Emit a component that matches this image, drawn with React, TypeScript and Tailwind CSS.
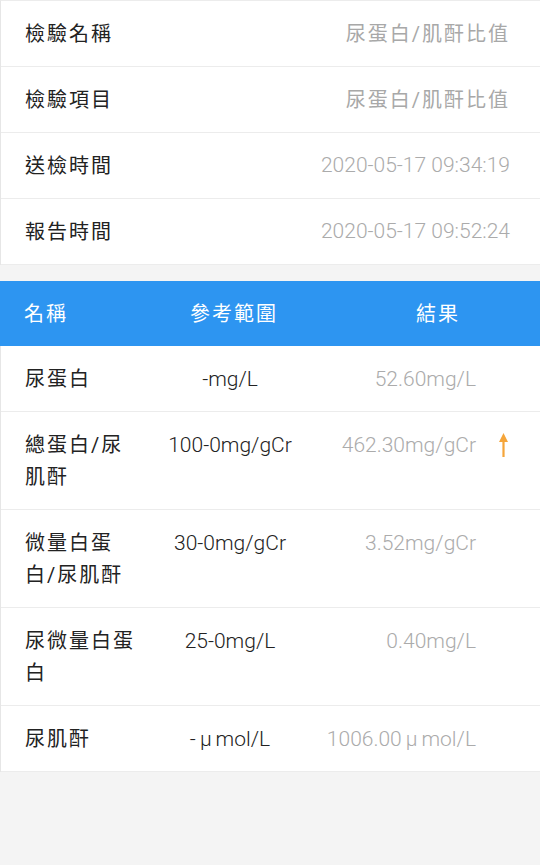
import React from "react";

const cjk = "font-['Roboto','Noto_Sans_CJK_TC',sans-serif]";

const info = [
  { k: "檢驗名稱", v: "尿蛋白/肌酐比值", cj: true },
  { k: "檢驗項目", v: "尿蛋白/肌酐比值", cj: true },
  { k: "送檢時間", v: "2020-05-17 09:34:19", cj: false },
  { k: "報告時間", v: "2020-05-17 09:52:24", cj: false },
];

const rows = [
  { name: "尿蛋白", range: "-mg/L", result: "52.60mg/L", up: false },
  { name: "總蛋白/尿肌酐", range: "100-0mg/gCr", result: "462.30mg/gCr", up: true },
  { name: "微量白蛋白/尿肌酐", range: "30-0mg/gCr", result: "3.52mg/gCr", up: false },
  { name: "尿微量白蛋白", range: "25-0mg/L", result: "0.40mg/L", up: false },
  { name: "尿肌酐", range: "-μmol/L", result: "1006.00μmol/L", up: false },
];

function Unit({ text }: { text: string }) {
  const parts = text.split("μ");
  if (parts.length === 1) return <>{text}</>;
  return (
    <>
      {parts[0]}
      <span className="mx-[4px]">μ</span>
      {parts[1]}
    </>
  );
}

function UpArrow() {
  return (
    <svg width="11" height="26" viewBox="0 0 11 26">
      <path d="M5.5 1 L10 10 L6.6 10 L6.6 25 L4.4 25 L4.4 10 L1 10 Z" fill="#f5a53a" />
    </svg>
  );
}

export default function App() {
  return (
    <div className={`min-h-screen bg-[#f4f4f4] ${cjk}`}>
      <div className="bg-white border-l border-[#e6e6e6] border-t border-t-[#ececec]">
        {info.map((r) => (
          <div
            key={r.k}
            className="flex items-center justify-between h-[66px] pl-[24px] pr-[30px] border-b border-[#ececec]"
          >
            <span className="text-[20px] tracking-[2px] text-[#222]">{r.k}</span>
            <span
              className={
                r.cj
                  ? "text-[20px] tracking-[2px] text-[#a8a8a8]"
                  : "text-[21px] text-[#ababab] font-light"
              }
            >
              {r.v}
            </span>
          </div>
        ))}
      </div>

      <div className="h-[16px]" />

      <div className="flex items-center h-[65px] bg-[#2d95f1] text-white text-[20px] tracking-[2px]">
        <div className="w-[140px] pl-[24px]">名稱</div>
        <div className="w-[188px] text-center">參考範圍</div>
        <div className="flex-1 pl-[8px] text-center">結果</div>
      </div>

      <div className="bg-white border-l border-[#e6e6e6]">
        {rows.map((r) => (
          <div
            key={r.name}
            className="flex items-start pl-[24px] pr-[10px] pt-[17px] pb-[16px] leading-[32px] border-b border-[#ececec]"
          >
            <div className="w-[116px] text-[20px] tracking-[2px] text-[#222] break-all">
              {r.name}
            </div>
            <div className="w-[178px] text-center text-[21px] text-[#222] font-light">
              <Unit text={r.range} />
            </div>
            <div className="flex-1 text-right text-[21px] text-[#ababab] font-light">
              <Unit text={r.result} />
            </div>
            <div className="w-[54px] flex justify-center pt-[3px]">
              {r.up ? <UpArrow /> : null}
            </div>
          </div>
        ))}
      </div>
    </div>
  );
}
